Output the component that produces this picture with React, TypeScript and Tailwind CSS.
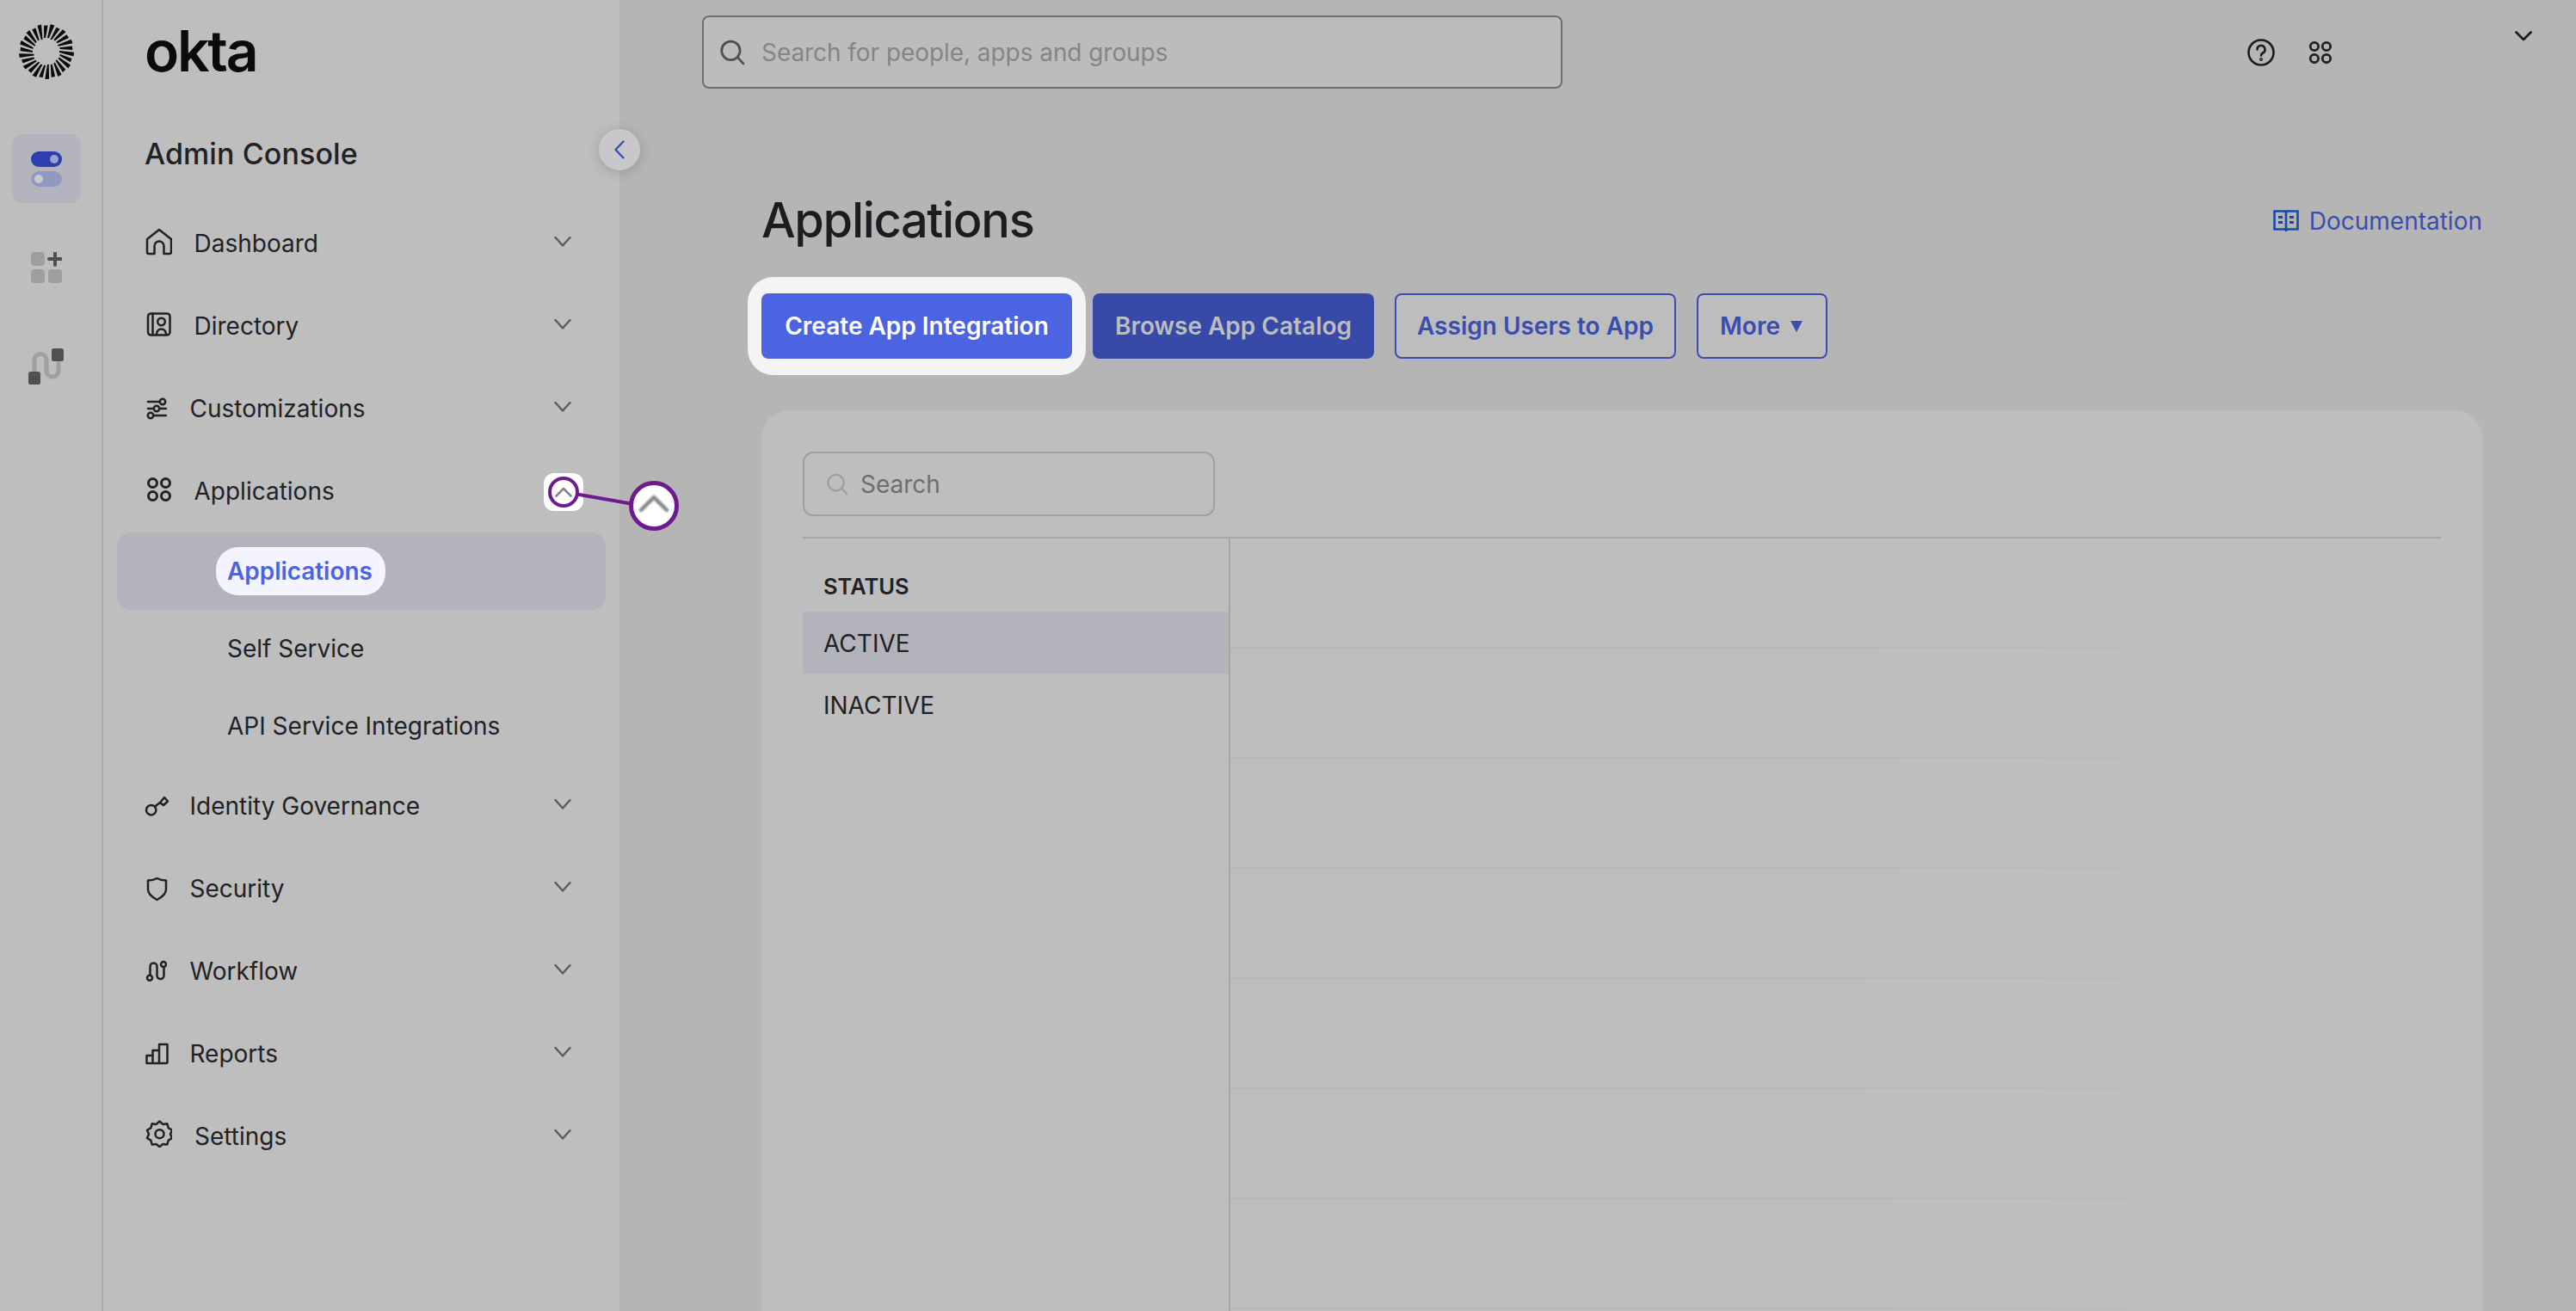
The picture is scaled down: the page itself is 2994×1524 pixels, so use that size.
import React from "react";

const ink = "#212126";

function Sun() {
  const n = 26;
  const rays = Array.from({ length: n }, (_, i) => {
    const a = (i / n) * Math.PI * 2;
    const skew = 0.1;
    const ri = i % 3 === 0 ? 15 : 16;
    const ro = i % 2 === 0 ? 32 : 30.5;
    const wi = 0.06;
    const wo = 0.075;
    const pt = (ang: number, r: number) => `${32 + Math.cos(ang) * r},${32 + Math.sin(ang) * r}`;
    return [pt(a - wi, ri), pt(a + wi, ri), pt(a + skew + wo, ro), pt(a + skew - wo, ro)].join(" ");
  });
  return (
    <svg width="64" height="64" viewBox="0 0 64 64">
      {rays.map((r, i) => (
        <polygon key={i} points={r} fill="#0b0b0b" />
      ))}
    </svg>
  );
}

function Chevron({ up = false, className = "" }: { up?: boolean; className?: string }) {
  return (
    <svg width="20" height="12" viewBox="0 0 20 12" fill="none" className={className}>
      <path
        d={up ? "M1.5 11 10 1.5 18.5 11" : "M1.5 1 10 10.5 18.5 1"}
        stroke="#5c5c5e"
        strokeWidth="2.4"
        strokeLinecap="round"
        strokeLinejoin="round"
      />
    </svg>
  );
}

const stroke = { fill: "none", stroke: ink, strokeWidth: 2.5, strokeLinecap: "round" as const, strokeLinejoin: "round" as const };

const HomeI = () => (
  <svg className="-mt-[4px]" width="32" height="32" viewBox="0 0 32 32" {...stroke}>
    <path d="M3 13 17 2 31 13V28a2 2 0 0 1-2 2H22.5V21a5.5 5.5 0 0 0-11 0V30H5a2 2 0 0 1-2-2Z" />
  </svg>
);
const DirectoryI = () => (
  <svg width="32" height="32" viewBox="0 0 32 32" {...stroke}>
    <rect x="4" y="1.4" width="25.5" height="25.2" rx="3.5" />
    <path d="M9.5 1.4V26.6" />
    <circle cx="19.5" cy="11" r="4.3" />
    <path d="M14 26V25a5.5 5.5 0 0 1 11 0V26" />
  </svg>
);
const SlidersI = () => (
  <svg width="26" height="26" viewBox="0 0 26 26" {...stroke}>
    <path d="M4 5H17.5M4 13H10.5M17.5 13H25M10.5 21H25" />
    <circle cx="21" cy="5" r="3.2" />
    <circle cx="14" cy="13" r="3.2" />
    <circle cx="7" cy="21" r="3.2" />
  </svg>
);
const AppsI = ({ size = 32, className = "" }: { size?: number; className?: string }) => (
  <svg className={className} width={size} height={size} viewBox="0 0 32 32" fill="none" stroke={ink} strokeWidth="3">
    <circle cx="9.5" cy="8.5" r="5" />
    <circle cx="24.5" cy="8.5" r="5" />
    <circle cx="9.5" cy="23.5" r="5" />
    <circle cx="24.5" cy="23.5" r="5" />
  </svg>
);
const KeyI = () => (
  <svg width="28" height="28" viewBox="0 0 28 28" {...stroke}>
    <circle cx="7.7" cy="18.7" r="5.7" />
    <path d="M12 14.5 18 10M18 10 23 4 27 8.5 22 13Z" />
  </svg>
);
const ShieldI = () => (
  <svg width="28" height="30" viewBox="0 0 28 30" {...stroke}>
    <path d="M14.5 3C17.5 4.7 21 5.5 25 5.6V16C25 21 20 25 14.5 28C9 25 4 21 4 16V5.6C8 5.5 11.5 4.7 14.5 3Z" />
  </svg>
);
const WorkflowI = () => (
  <svg width="26" height="26" viewBox="0 0 26 26" {...stroke}>
    <circle cx="6" cy="20.7" r="3" />
    <circle cx="22" cy="5" r="3" />
    <path d="M6.5 17.5V7.5a4 4 0 0 1 8 0V18a4 4 0 0 0 8 0V10" />
  </svg>
);
const ReportsI = () => (
  <svg width="28" height="26" viewBox="0 0 28 26" {...stroke}>
    <path d="M2.5 24V15H9.5V24ZM9.5 24V9H17V24ZM17 24V2H26.5V23a1 1 0 0 1-1 1H3.5" />
  </svg>
);
const GearI = () => (
  <svg className="-mt-[6px]" width="32" height="32" viewBox="-1.5 0 32 32" {...stroke}>
    <path d="M16 1.5l3.8 3.4 5-.6 1.4 4.9 4.3 2.6-2 4.6 2 4.6-4.3 2.6-1.4 4.9-5-.6-3.8 3.4-3.8-3.4-5 .6-1.4-4.9-4.3-2.6 2-4.6-2-4.6 4.3-2.6 1.4-4.9 5 .6Z" />
    <circle cx="16" cy="16.2" r="5" />
  </svg>
);

function NavRow({ icon, label, textLeft }: { icon: React.ReactNode; label: string; textLeft: string }) {
  return (
    <div className="flex h-[96px] items-center pr-[56px]">
      <div className="flex w-[36px] shrink-0 items-center">{icon}</div>
      <span className={`flex-1 text-[28px] leading-[36px] text-[#212126] ${textLeft}`}>{label}</span>
      <Chevron className="-mt-[4px]" />
    </div>
  );
}

function SearchIcon({ color, size }: { color: string; size: number }) {
  return (
    <svg width={size} height={size} viewBox="0 0 28 28" fill="none" stroke={color} strokeWidth="2.6" strokeLinecap="round">
      <circle cx="12.5" cy="12" r="10" />
      <path d="M20 19.5 26 26" />
    </svg>
  );
}

const rowLines = [0, 1, 2, 3, 4, 5, 6];

export default function App() {
  return (
    <div className="flex h-[1524px] w-[2994px] overflow-hidden bg-[#b5b5b5] font-['Inter',sans-serif] text-[#212126]">
      {/* Rail */}
      <aside className="flex w-[120px] shrink-0 flex-col items-center border-r-2 border-[#a9a9a9] bg-[#bebebe] pr-[10px] pt-[28px]">
        <Sun />
        <div className="mt-[64px] flex h-[80px] w-[80px] flex-col items-center justify-center gap-[5px] rounded-[12px] bg-[#b4b4be]">
          <div className="flex h-[18px] w-[36px] items-center justify-end rounded-full bg-[#2d3fae] pr-[4px]">
            <div className="h-[10px] w-[10px] rounded-full bg-[#9da3c9]" />
          </div>
          <div className="flex h-[18px] w-[36px] items-center rounded-full bg-[#9299c0] pl-[4px]">
            <div className="h-[10px] w-[10px] rounded-full bg-[#c9c9cb]" />
          </div>
        </div>
        <svg className="mt-[57px]" width="36" height="36" viewBox="0 0 36 36">
          <rect x="0" y="0" width="16" height="16" rx="4" fill="#9e9e9e" />
          <rect x="0" y="20" width="16" height="16" rx="4" fill="#9e9e9e" />
          <rect x="20" y="20" width="16" height="16" rx="4" fill="#9e9e9e" />
          <path d="M28 1V15M21 8H35" stroke="#4f4f4f" strokeWidth="4" strokeLinecap="round" />
        </svg>
        <svg className="mt-[76px]" width="42" height="42" viewBox="0 0 42 42">
          <path d="M7 30V13.5a7 7 0 0 1 14 0V26a7 7 0 0 0 14 0V18" fill="none" stroke="#a0a0a0" strokeWidth="5" strokeLinecap="round" />
          <rect x="27" y="0" width="14" height="15" rx="2.5" fill="#505050" />
          <rect x="0" y="27" width="14" height="15" rx="2.5" fill="#505050" />
        </svg>
      </aside>

      {/* Sidebar */}
      <nav className="relative flex w-[600px] shrink-0 flex-col bg-[#bebebe] pl-[48px]">
        <div className="mt-[19px] h-[80px] text-[66px] font-semibold leading-[80px] tracking-[-2.2px] text-[#0b0b0b]">okta</div>
        <div className="mt-[60px] h-[40px] text-[34px] font-medium leading-[40px] tracking-[0.1px] text-[#212126]">Admin Console</div>
        <div className="mt-[36px] flex flex-col">
          <NavRow icon={<HomeI />} label="Dashboard" textLeft="ml-[21.5px]" />
          <NavRow icon={<DirectoryI />} label="Directory" textLeft="ml-[21.5px]" />
          <NavRow icon={<SlidersI />} label="Customizations" textLeft="ml-[16.5px]" />
          <div className="flex h-[96px] items-center pr-[56px]">
            <div className="flex w-[36px] shrink-0 items-center">
              <AppsI className="-mt-[4px]" />
            </div>
            <span className="ml-[21.5px] flex-1 text-[28px] leading-[36px] text-[#212126]">Applications</span>
            <Chevron up className="opacity-0" />
          </div>
          <div className="-ml-[32px] mr-[16px] flex h-[90px] items-center rounded-[16px] bg-[#b3b3bb] pl-[115px]">
            <span className="flex h-[56px] items-center rounded-[26px] bg-[#f3f4fd] pl-[13px] pr-[15px] text-[28px] font-semibold tracking-[-0.05px] text-[#4c63e2]">
              Applications
            </span>
          </div>
          <div className="flex h-[90px] items-center pl-[96px] text-[28px] text-[#212126]">Self Service</div>
          <div className="flex h-[90px] items-center pl-[96px] text-[28px] text-[#212126]">API Service Integrations</div>
          <NavRow icon={<KeyI />} label="Identity Governance" textLeft="ml-[16.5px]" />
          <NavRow icon={<ShieldI />} label="Security" textLeft="ml-[16.5px]" />
          <NavRow icon={<WorkflowI />} label="Workflow" textLeft="ml-[16.5px]" />
          <NavRow icon={<ReportsI />} label="Reports" textLeft="ml-[16.5px]" />
          <NavRow icon={<GearI />} label="Settings" textLeft="ml-[22px]" />
        </div>

        {/* Collapse button */}
        <div className="absolute left-[576px] top-[150px] flex h-[48px] w-[48px] items-center justify-center rounded-full bg-[#c8c8cc] shadow-[0_2px_14px_rgba(0,0,0,0.18)]">
          <svg width="12" height="22" viewBox="0 0 12 22" fill="none">
            <path d="M10.5 1.5 1.5 11 10.5 20.5" stroke="#3b4fb0" strokeWidth="2.4" strokeLinecap="round" strokeLinejoin="round" />
          </svg>
        </div>

        {/* Callout over the Applications chevron */}
        <div className="absolute left-[512px] top-[550px] flex h-[44px] w-[46px] items-center justify-center rounded-[12px] bg-white">
          <div className="flex h-[36px] w-[36px] items-center justify-center rounded-full border-[4px] border-[#6f1a8f]">
            <svg width="20" height="12" viewBox="0 0 20 12" fill="none">
              <path d="M1.5 10.5 10 2 18.5 10.5" stroke="#858585" strokeWidth="2.6" strokeLinecap="round" strokeLinejoin="round" />
            </svg>
          </div>
        </div>
        <div className="absolute left-[550px] top-[578px] h-[4px] w-[64px] rotate-[10deg] bg-[#6f1a8f]" />
        <div className="absolute left-[611px] top-[559px] z-10 flex h-[58px] w-[58px] items-center justify-center rounded-full border-[5px] border-[#6f1a8f] bg-white">
          <svg className="-mt-[6px] blur-[0.8px]" width="36" height="22" viewBox="0 0 36 22" fill="none">
            <path d="M3 19 18 4 33 19" stroke="#858585" strokeWidth="4.5" strokeLinecap="round" strokeLinejoin="round" />
          </svg>
        </div>
      </nav>

      {/* Main */}
      <main className="relative flex min-w-0 flex-1 flex-col">
        <div className="ml-[96px] mt-[18px] flex h-[85px] w-[1000px] items-center rounded-[8px] border-2 border-[#6e6e6e] bg-[#bcbcbc] pl-[18px]">
          <SearchIcon color="#505050" size={30} />
          <span className="ml-[19px] text-[28px] tracking-[-0.06px] text-[#858585]">Search for people, apps and groups</span>
        </div>

        <div className="absolute left-[1892px] top-[45px] flex items-center gap-[37px]">
          <svg width="32" height="32" viewBox="0 0 32 32" fill="none" stroke="#1d1d1f" strokeWidth="2.6" strokeLinecap="round">
            <circle cx="16" cy="16" r="14.5" />
            <path d="M11.5 12.5a4.5 4.5 0 1 1 6.6 4c-1.4.8-2.1 1.6-2.1 3" />
            <circle cx="16" cy="24" r="0.6" fill="#1d1d1f" />
          </svg>
          <AppsI size={30} />
        </div>
        <div className="absolute left-[2203px] top-[36px]">
          <svg width="20" height="12" viewBox="0 0 20 12" fill="none">
            <path d="M1.5 1.5 10 10 18.5 1.5" stroke="#1d1d1f" strokeWidth="2.8" strokeLinecap="round" strokeLinejoin="round" />
          </svg>
        </div>

        <div className="ml-[165px] mr-[109px] mt-[118px] flex h-[70px] items-center justify-between">
          <h1 className="text-[56px] font-medium leading-[70px] tracking-[-1.35px] text-[#1d1d21]">Applications</h1>
          <div className="mt-[1px] flex items-center gap-[12px]">
            <svg width="30" height="26" viewBox="0 0 30 26" fill="none" stroke="#1549ad" strokeWidth="2.6">
              <path d="M1.5 1.5H28.5V22.5H1.5Z" />
              <path d="M15 1.5V25" />
              <path d="M6 8.5H11M6 14.5H11M19 8.5H24M19 14.5H24" strokeWidth="3" />
            </svg>
            <span className="text-[28px] text-[#3b4db0]">Documentation</span>
          </div>
        </div>

        <div className="ml-[165px] mt-[50px] flex items-stretch gap-[24px]">
          <div className="relative -mx-[16px] -my-[19px] rounded-[30px] bg-[#f4f4f4] px-[16px] py-[19px]">
            <button className="flex h-[76px] w-[361px] items-center justify-center rounded-[8px] bg-[#4c63e2] text-[28px] font-semibold text-white">
              Create App Integration
            </button>
          </div>
          <button className="flex h-[76px] w-[327px] items-center justify-center rounded-[8px] bg-[#384aa8] text-[28px] font-semibold text-[#bdbdbd]">
            Browse App Catalog
          </button>
          <button className="flex h-[76px] w-[327px] items-center justify-center rounded-[8px] border-2 border-[#3b4db0] bg-[#bdbdbd] text-[28px] font-semibold text-[#3b4db0]">
            Assign Users to App
          </button>
          <button className="flex h-[76px] w-[152px] items-center justify-center gap-[12px] rounded-[8px] border-2 border-[#3b4db0] bg-[#bdbdbd] pr-[2px] text-[28px] font-semibold text-[#3b4db0]">
            More
            <svg width="14" height="14" viewBox="0 0 14 14">
              <path d="M0 1H14L7 14Z" fill="#3b4db0" />
            </svg>
          </button>
        </div>

        {/* Panel */}
        <section className="ml-[165px] mr-[109px] mt-[60px] flex flex-1 flex-col rounded-t-[32px] bg-[#bebebe] px-[48px] pt-[48px]">
          <div className="flex h-[75px] w-[479px] items-center rounded-[12px] border-2 border-[#a0a0a0] pl-[25px]">
            <SearchIcon color="#a0a0a0" size={26} />
            <span className="ml-[14px] text-[28px] text-[#6e6e6e]">Search</span>
          </div>
          <div className="mt-[24px] flex flex-1 border-t-2 border-[#a6a6a6]">
            <div className="flex w-[495px] shrink-0 flex-col">
              <div className="flex h-[85px] items-end pb-[13px] pl-[24px] text-[25.5px] font-semibold leading-[32px] text-[#212126]">STATUS</div>
              <div className="flex h-[72px] items-center bg-[#b3b3bb] pl-[24px] pt-[2px] text-[28px] text-[#212126]">ACTIVE</div>
              <div className="flex h-[72px] items-center pl-[24px] pt-[2px] text-[28px] text-[#212126]">INACTIVE</div>
            </div>
            <div className="flex flex-1 flex-col border-l-2 border-[#a6a6a6]">
              {rowLines.map((i) => (
                <div
                  key={i}
                  className="h-[128px] shrink-0 bg-[linear-gradient(to_right,#b6b6b6,#b8b8b8_60%,#bebebe_85%)] bg-[length:100%_2px] bg-bottom bg-no-repeat"
                />
              ))}
            </div>
          </div>
        </section>
      </main>
    </div>
  );
}
